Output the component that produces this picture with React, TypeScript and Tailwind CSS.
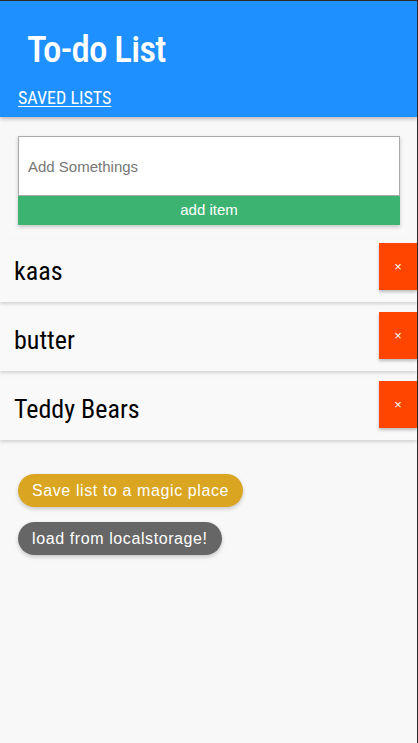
const items = ["kaas", "butter", "Teddy Bears"]

export default function App() {
  return (
    <div className="h-[743px] w-[418px] overflow-hidden border-t border-r border-[#2a2a2a] bg-[#f8f8f8]">
      <header className="h-[116px] bg-[#1e90ff] pl-[18px] pt-[25px] shadow-[0_2px_4px_rgba(0,0,0,0.25)] font-['Roboto',sans-serif] font-stretch-condensed">
        <h1 className="pl-[9px] text-[37px] font-medium leading-[48px] tracking-[-0.8px] text-white">To-do List</h1>
        <a className="mt-[13px] inline-block text-[18px] leading-[22px] text-white underline underline-offset-2">
          SAVED LISTS
        </a>
      </header>

      <div className="px-[18px] pt-[19px]">
        <div className="w-[382px] shadow-[0_2px_4px_rgba(0,0,0,0.2)]">
          <input
            placeholder="Add Somethings"
            className="block h-[60px] w-[382px] border border-[#aaa] bg-white px-[9px] text-[15px] font-['Liberation_Sans',sans-serif] placeholder:text-[#777] outline-none"
          />
          <button className="block h-[29px] w-[382px] bg-[#3cb371] text-[15px] text-white font-['Liberation_Sans',sans-serif]">
            add item
          </button>
        </div>
      </div>

      <ul className="mt-[15px]">
        {items.map((item) => (
          <li
            key={item}
            className="mb-[7px] flex h-[62px] items-start justify-between bg-[#f9f9f9] shadow-[0_2px_3px_rgba(0,0,0,0.15)]"
          >
            <span className="pl-[14px] pt-[14px] text-[26px] leading-[34px] text-black font-['Roboto',sans-serif] font-stretch-condensed">
              {item}
            </span>
            <button className="mt-[3px] h-[47px] w-[38px] bg-[#ff4500] text-[13px] text-white shadow-[0_2px_3px_rgba(0,0,0,0.25)] font-['Liberation_Sans',sans-serif]">
              ×
            </button>
          </li>
        ))}
      </ul>

      <div className="flex flex-col items-start gap-[15px] pl-[18px] pt-[27px] font-['Liberation_Sans',sans-serif]">
        <button className="h-[33px] rounded-full bg-[#daa520] px-[14px] text-[16px] tracking-[0.6px] text-white shadow-[0_2px_4px_rgba(0,0,0,0.2)]">
          Save list to a magic place
        </button>
        <button className="h-[33px] rounded-full bg-[#666] px-[14px] text-[16px] tracking-[0.6px] text-white shadow-[0_2px_4px_rgba(0,0,0,0.2)]">
          load from localstorage!
        </button>
      </div>
    </div>
  )
}
